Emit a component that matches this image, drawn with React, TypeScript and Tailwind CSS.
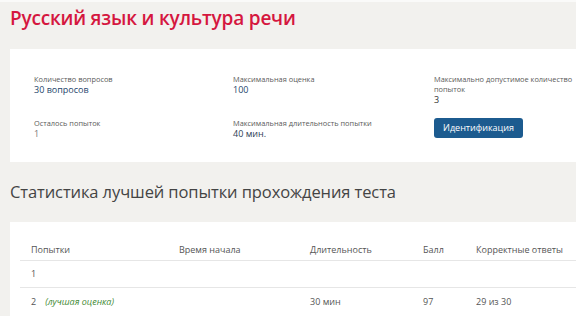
import React from "react";

const Info = ({ label, value, valueClass = "text-[#24456b]" }: { label: string; value: string; valueClass?: string }) => (
  <div className="flex flex-col">
    <div className="text-[7.4px] leading-[10px] text-[#5a5a5a]">{label}</div>
    <div className={`text-[9px] leading-[12px] ${valueClass}`}>{value}</div>
  </div>
);

export default function App() {
  return (
    <div className="w-[576px] h-[316px] overflow-hidden bg-[#f2f1ee] border-t-2 border-[#fafaf9] font-['Open_Sans',sans-serif]">
      <div className="h-[47px] pl-[10px] pt-[3px]">
        <h1 className="text-[19px] leading-[26px] font-semibold text-[#d5173f] tracking-[-0.2px]">Русский язык и культура речи</h1>
      </div>
      <div className="ml-[10px] w-[600px] h-[113px] bg-white pt-[25px] pl-[24px]">
        <div className="grid grid-cols-[199px_201px_145px] grid-rows-[44px_auto]">
          <Info label="Количество вопросов" value="30 вопросов" />
          <Info label="Максимальная оценка" value="100" />
          <Info label="Максимально допустимое количество попыток" value="3" valueClass="text-[#333]" />
          <Info label="Осталось попыток" value="1" valueClass="text-[#777]" />
          <Info label="Максимальная длительность попытки" value="40 мин." valueClass="text-[#2d3e55]" />
          <div>
            <button className="block w-[89px] h-[20px] rounded-[3px] bg-[#1c5b8f] text-white text-[9px] leading-[20px] text-center">Идентификация</button>
          </div>
        </div>
      </div>
      <div className="h-[60px] pl-[10px] pt-[19px]">
        <h2 className="text-[16.5px] leading-[22px] text-[#444] tracking-[-0.1px]">Статистика лучшей попытки прохождения теста</h2>
      </div>
      <div className="ml-[10px] w-[600px] h-[200px] bg-white pt-[18px] pl-[10px] text-[9px] text-[#555]">
        <div className="grid grid-cols-[148px_131px_113px_53px_1fr] h-[21px] items-center border-b border-[#e6e6e6] pl-[11px]">
          <div>Попытки</div>
          <div>Время начала</div>
          <div>Длительность</div>
          <div>Балл</div>
          <div>Корректные ответы</div>
        </div>
        <div className="grid grid-cols-[148px_131px_113px_53px_1fr] h-[27px] items-center border-b border-[#e6e6e6] pl-[11px]">
          <div>1</div>
          <div></div>
          <div></div>
          <div></div>
          <div></div>
        </div>
        <div className="grid grid-cols-[148px_131px_113px_53px_1fr] h-[28px] items-center pl-[11px]">
          <div className="flex gap-[9px]">
            <span>2</span>
            <span className="italic text-[#3f8a35]">(лучшая оценка)</span>
          </div>
          <div></div>
          <div>30 мин</div>
          <div>97</div>
          <div>29 из 30</div>
        </div>
      </div>
    </div>
  );
}
